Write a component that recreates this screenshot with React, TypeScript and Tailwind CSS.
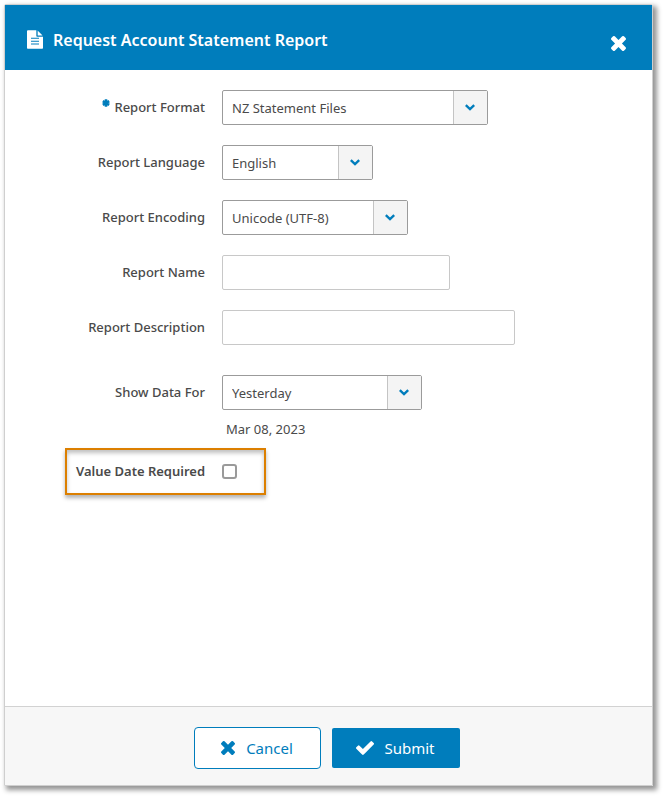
import React, { useState } from 'react';

interface IconProps {
  className?: string;
}

const FileIcon = ({ className }: IconProps) => (
  <svg viewBox="128 0 1536 1792" className={className} fill="currentColor" aria-hidden="true">
    <path
      fillRule="evenodd"
      d="M1596 476q14 14 28 36h-472v-472q22 14 36 28zM1120 640h544v1056q0 40-28 68t-68 28h-1344q-40 0-68-28t-28-68v-1600q0-40 28-68t68-28h800v544q0 40 28 68t68 28zM512 736v96h768v-96zM512 1010v96h768v-96zM512 1284v96h768v-96z"
    />
  </svg>
);

const TimesIcon = ({ className }: IconProps) => (
  <svg viewBox="302 366 1188 1188" className={className} fill="currentColor" aria-hidden="true">
    <path d="M1490 1322q0 40-28 68l-136 136q-28 28-68 28t-68-28l-294-294-294 294q-28 28-68 28t-68-28l-136-136q-28-28-28-68t28-68l294-294-294-294q-28-28-28-68t28-68l136-136q28-28 68-28t68 28l294 294 294-294q28-28 68-28t68 28l136 136q28 28 28 68t-28 68l-294 294 294 294q28 28 28 68z" />
  </svg>
);

const CheckIcon = ({ className }: IconProps) => (
  <svg viewBox="121 334 1550 1188" className={className} fill="currentColor" aria-hidden="true">
    <path d="M1671 566q0 40-28 68l-724 724-136 136q-28 28-68 28t-68-28l-136-136-362-362q-28-28-28-68t28-68l136-136q28-28 68-28t68 28l294 295 656-657q28-28 68-28t68 28l136 136q28 28 28 68z" />
  </svg>
);

const ChevronIcon = ({ className }: IconProps) => (
  <svg viewBox="0 0 10 7" className={className} fill="none" stroke="currentColor" strokeWidth="2.4" aria-hidden="true">
    <path d="M0.8 1.2 5 5.2 9.2 1.2" />
  </svg>
);

const RequiredIcon = ({ className }: IconProps) => (
  <svg viewBox="0 0 8 8" className={className} stroke="currentColor" strokeWidth="2.6" aria-hidden="true">
    <path d="M4 0.3V7.7M0.8 2.1 7.2 5.9M7.2 2.1 0.8 5.9" />
  </svg>
);

interface RowProps {
  id: string;
  label: string;
  required?: boolean;
  children: React.ReactNode;
}

const Row = ({ id, label, required, children }: RowProps) => (
  <div className="flex gap-[17px]">
    <label
      htmlFor={id}
      className="flex h-[35px] w-[200px] shrink-0 items-center justify-end pb-0.5 font-medium"
    >
      {required && <RequiredIcon className="mr-1 mb-2 size-2 text-[#007dbc]" />}
      {label}
    </label>
    <div className="min-w-0 flex-1">{children}</div>
  </div>
);

interface SelectProps {
  id: string;
  options: string[];
  width: string;
}

const Select = ({ id, options, width }: SelectProps) => (
  <div className={`relative max-w-full ${width}`}>
    <select
      id={id}
      className="h-[35px] w-full appearance-none rounded-xs border border-[#9b9b9b] bg-white pr-10 pl-[9px]"
    >
      {options.map((option) => (
        <option key={option}>{option}</option>
      ))}
    </select>
    <span className="pointer-events-none absolute inset-y-px right-px flex w-[34px] items-center justify-center border-l border-[#c4c4c4] bg-[#f4f4f4] pr-px">
      <ChevronIcon className="h-[7px] w-[10px] text-[#007dbc]" />
    </span>
  </div>
);

const inputClass = 'block h-[35px] max-w-full rounded-xs border border-[#c8c8c8] bg-white px-[9px]';

export default function App() {
  const [name, setName] = useState('');
  const [description, setDescription] = useState('');
  const [valueDate, setValueDate] = useState(false);

  return (
    <div className="flex min-h-screen bg-white pt-1 pr-[11px] pb-[11px] pl-1 font-['Noto_Sans','Open_Sans',sans-serif] text-[13px] leading-5 text-[#4a4a4a]">
      <form
        onSubmit={(e) => e.preventDefault()}
        className="flex flex-1 flex-col rounded-t-xs border border-[#cfcfcf] shadow-[3px_3px_5px_1px_rgba(0,0,0,0.42)]"
      >
        <header className="flex h-[65px] items-center bg-[#007dbc] pt-1 pr-[26px] pl-[22px] text-white">
          <FileIcon className="mr-[10px] h-[19px] w-4" />
          <h1 className="flex-1 text-base font-semibold">Request Account Statement Report</h1>
          <button type="button" aria-label="Close" className="mt-2">
            <TimesIcon className="size-[15px]" />
          </button>
        </header>

        <main className="flex flex-1 flex-col gap-5 bg-white py-5">
          <Row id="format" label="Report Format" required>
            <Select id="format" options={['NZ Statement Files']} width="w-[266px]" />
          </Row>
          <Row id="language" label="Report Language">
            <Select id="language" options={['English']} width="w-[151px]" />
          </Row>
          <Row id="encoding" label="Report Encoding">
            <Select id="encoding" options={['Unicode (UTF-8)']} width="w-[186px]" />
          </Row>
          <Row id="name" label="Report Name">
            <input
              id="name"
              type="text"
              value={name}
              onChange={(e) => setName(e.target.value)}
              className={`${inputClass} w-[228px]`}
            />
          </Row>
          <Row id="description" label="Report Description">
            <input
              id="description"
              type="text"
              value={description}
              onChange={(e) => setDescription(e.target.value)}
              className={`${inputClass} w-[293px]`}
            />
          </Row>

          <div className="pt-[10px]">
            <Row id="show" label="Show Data For">
              <Select id="show" options={['Yesterday']} width="w-[200px]" />
              <p className="pt-[9px] pl-1">Mar 08, 2023</p>
            </Row>
            <div className="mt-[9px] ml-[60px] flex h-[47px] w-[201px] items-center justify-between border-2 border-[#dc7f00] pr-[27px] pb-px pl-[9px] shadow-[0_3px_4px_rgba(0,0,0,0.3),inset_0_3px_4px_rgba(0,0,0,0.25)]">
              <label htmlFor="value-date" className="pb-px font-semibold">
                Value Date Required
              </label>
              <input
                id="value-date"
                type="checkbox"
                checked={valueDate}
                onChange={(e) => setValueDate(e.target.checked)}
                className="size-[15px] appearance-none rounded-[3px] border-2 border-[#9a9a9a] bg-white checked:bg-[#007dbc]"
              />
            </div>
          </div>
        </main>

        <footer className="flex items-center justify-center gap-[11px] border-t border-[#d2d2d2] bg-[#f7f7f7] pt-5 pr-1 pb-4 text-[15px] text-[#007dbc]">
          <button
            type="button"
            className="flex h-[42px] w-[127px] items-center justify-center gap-[11px] rounded-sm border border-[#007dbc] bg-white"
          >
            <TimesIcon className="size-[14px]" />
            Cancel
          </button>
          <button
            type="submit"
            className="flex h-10 w-32 items-center justify-center gap-[10px] rounded-xs bg-[#007dbc] text-white"
          >
            <CheckIcon className="h-[14px] w-[18px]" />
            Submit
          </button>
        </footer>
      </form>
    </div>
  );
}
